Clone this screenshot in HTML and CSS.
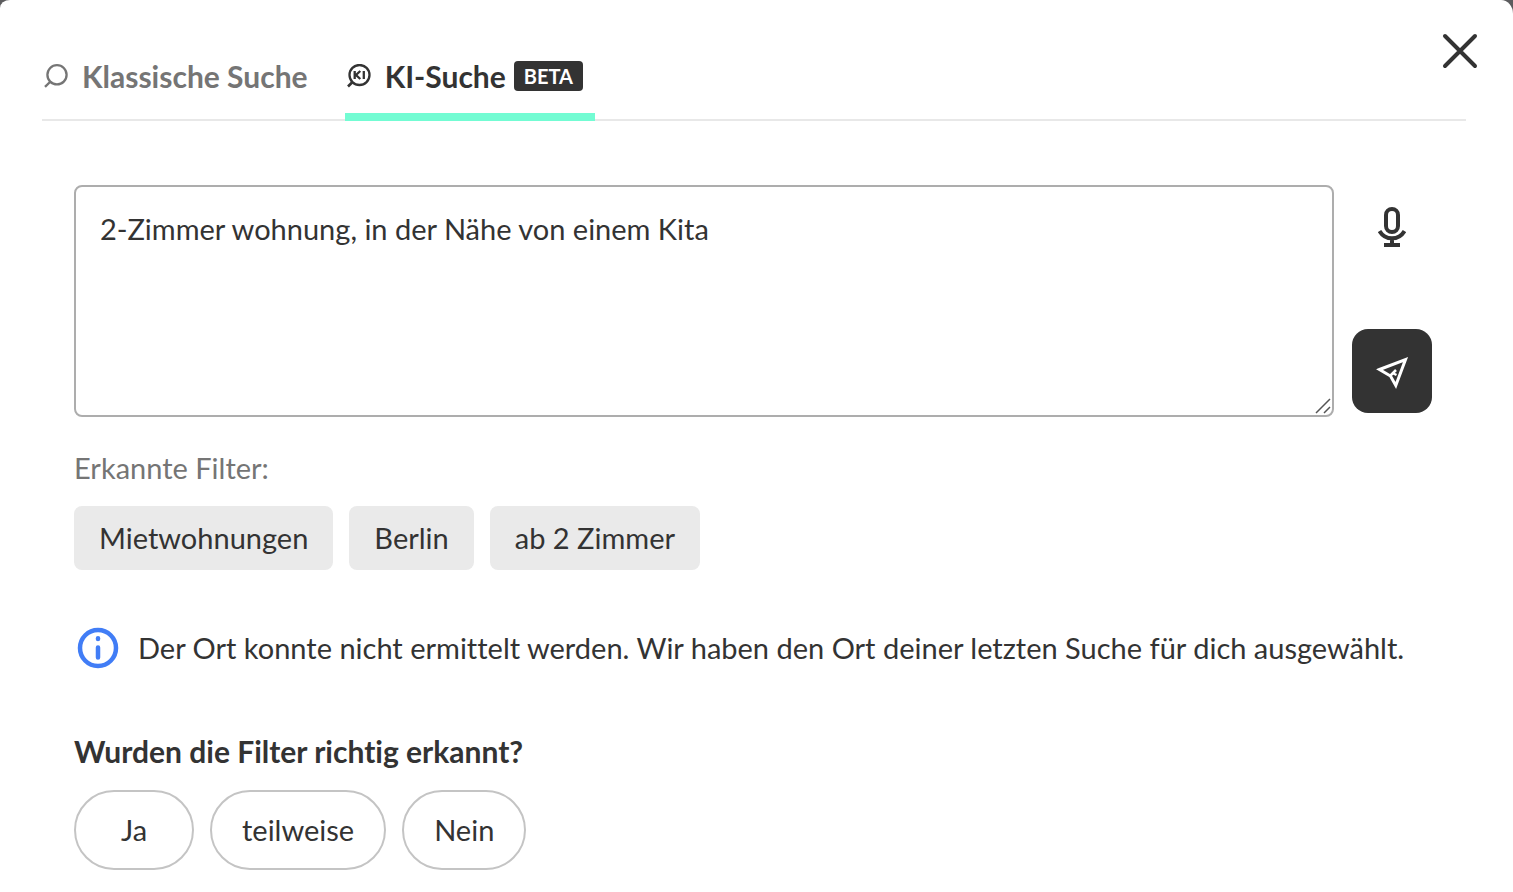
FILE: index.html
```
<!DOCTYPE html>
<html lang="de">
<head>
<meta charset="utf-8">
<meta name="viewport" content="width=device-width, initial-scale=1">
<title>KI-Suche</title>
<link rel="stylesheet" href="styles.css">
</head>
<body>
<main class="dialog" role="dialog" aria-label="Suche">
  <button class="close" type="button" aria-label="Schließen">
    <svg width="36" height="36" viewBox="0 0 36 36" fill="none" stroke="currentColor" stroke-width="4" stroke-linecap="round"><path d="M3 3l30 30M33 3L3 33"/></svg>
  </button>
  <nav class="tabs" role="tablist" aria-label="Suchart">
    <button class="tab tab-classic" type="button" role="tab" aria-selected="false">
      <svg width="24" height="24" viewBox="0 0 24 24" fill="none" stroke="currentColor" stroke-width="2.300"><circle cx="13" cy="10.800" r="9.600"/><path d="M6.500 17.500L1 22.800"/></svg>
      <span>Klassische Suche</span>
    </button>
    <button class="tab tab-ai" type="button" role="tab" aria-selected="true">
      <svg class="ai-icon" width="24" height="24" viewBox="0 0 24 24" fill="none" stroke="currentColor" stroke-width="2.300"><circle cx="12.500" cy="11" r="10"/><path d="M5.500 18L1 22.500" stroke-width="2.600"/><path d="M7.700 7v8M13.300 7l-4.300 4 4.300 4M16.800 7v8"/></svg>
      <span>KI-Suche</span>
      <span class="badge">BETA</span>
    </button>
  </nav>
  <section class="content">
    <form class="query">
      <div class="field">
        <textarea class="prompt" aria-label="Suchanfrage">2-Zimmer wohnung, in der Nähe von einem Kita</textarea>
        <svg class="grip" width="16" height="16" viewBox="0 0 16 16" fill="none" stroke="#555" stroke-width="1.500"><path d="M1 15L15 1M9 15l6-6"/></svg>
      </div>
      <div class="actions">
        <button class="mic" type="button" aria-label="Spracheingabe">
          <svg width="28" height="40" viewBox="0 0 28 40" fill="none" stroke="currentColor" stroke-width="4"><rect x="8" y="2" width="12" height="23" rx="6"/><path d="M1.500 24c3 5 7 7.300 12.500 7.300S23.500 29 26.500 24M14 31v6M6 38h16"/></svg>
        </button>
        <button class="send" type="submit" aria-label="Suchen">
          <svg width="34" height="34" viewBox="0 0 34 34" fill="none" stroke="currentColor" stroke-width="3"><path d="M4.500 13.500L30.500 3.500 20.800 29.500 15.500 20z"/><path d="M14.500 20.500l6.500-6.500M17.500 17l4 2" stroke-width="2.500"/></svg>
        </button>
      </div>
    </form>
    <p class="label">Erkannte Filter:</p>
    <ul class="chips">
      <li class="chip">Mietwohnungen</li>
      <li class="chip">Berlin</li>
      <li class="chip">ab 2 Zimmer</li>
    </ul>
    <div class="notice" role="status">
      <svg width="42" height="42" viewBox="0 0 42 42" fill="none" stroke="#417df6" stroke-width="4.500" stroke-linecap="round"><circle cx="21" cy="21" r="18"/><path d="M21 20.500v10M21 11.300v.8"/></svg>
      <p class="notice-text">Der Ort konnte nicht ermittelt werden. Wir haben den Ort deiner letzten Suche für dich ausgewählt.</p>
    </div>
    <h2 class="question">Wurden die Filter richtig erkannt?</h2>
    <div class="answers">
      <button class="answer" type="button">Ja</button>
      <button class="answer" type="button">teilweise</button>
      <button class="answer" type="button">Nein</button>
    </div>
  </section>
</main>
</body>
</html>
```
FILE: styles.css
```
* { box-sizing: border-box; }
body {
  margin: 0;
  background: #5c5c5e;
  color: #333;
  font: 400 29px/40px Lato, "Open Sans", sans-serif;
  font-variant-ligatures: none;
}
button, textarea { font: inherit; font-variant-ligatures: none; color: inherit; }
button { padding: 0; border: 0; background: none; cursor: pointer; }
p, h2, ul { margin: 0; padding: 0; }
svg { display: block; flex: none; }
.dialog {
  position: relative;
  min-height: 100vh;
  padding: 32px 47px 22px 42px;
  background: #fff;
  border-radius: 10px 12px 0 0 / 8px 14px 0 0;
}
.close { position: absolute; top: 33px; right: 35px; }
.tabs {
  display: flex;
  height: 89px;
  border-bottom: 2px solid #e8e8e8;
}
.tab {
  display: flex;
  align-items: center;
  height: 89px;
  padding-top: 6px;
  font-size: 30px;
  font-weight: 700;
  border-bottom: 8px solid transparent;
}
.tab-classic { gap: 14px; padding-left: 2px; padding-right: 37px; color: #757575; }
.tab-ai { gap: 8px; padding-left: 2px; padding-right: 12px; border-color: #73fcd3; }
.ai-icon { margin-right: 6px; }
.badge {
  padding: 0 10px;
  border-radius: 4px;
  background: #333;
  color: #fff;
  font-size: 20px;
  line-height: 30px;
}
.content { padding: 64px 34px 0 32px; }
.query { display: flex; gap: 18px; }
.field { position: relative; flex: 1; }
.prompt {
  display: block;
  width: 100%;
  height: 232px;
  padding: 22px 24px;
  border: 2px solid #adadad;
  border-radius: 8px;
  background: #fff;
  resize: none;
  outline: 0;
}
.grip { position: absolute; right: 3px; bottom: 3px; }
.actions {
  display: flex;
  flex-direction: column;
  justify-content: space-between;
  align-items: center;
  width: 80px;
  padding: 22px 0 4px;
}
.send {
  display: grid;
  place-items: center;
  width: 80px;
  height: 84px;
  padding-top: 4px;
  border-radius: 16px;
  background: #333;
  color: #fff;
}
.label { margin-top: 31px; color: #757575; }
.chips { display: flex; gap: 16px; margin-top: 18px; list-style: none; }
.chip { padding: 12px 25px; border-radius: 8px; background: #eaeaea; }
.notice { display: flex; align-items: center; gap: 19px; margin-top: 57px; padding-left: 3px; }
.question { margin-top: 62px; font-size: 30px; font-weight: 700; }
.answers { display: flex; gap: 16px; margin-top: 19px; }
.answer {
  min-width: 120px;
  height: 80px;
  padding: 0 30px;
  border: 2px solid #c4c4c4;
  border-radius: 40px;
}
```
